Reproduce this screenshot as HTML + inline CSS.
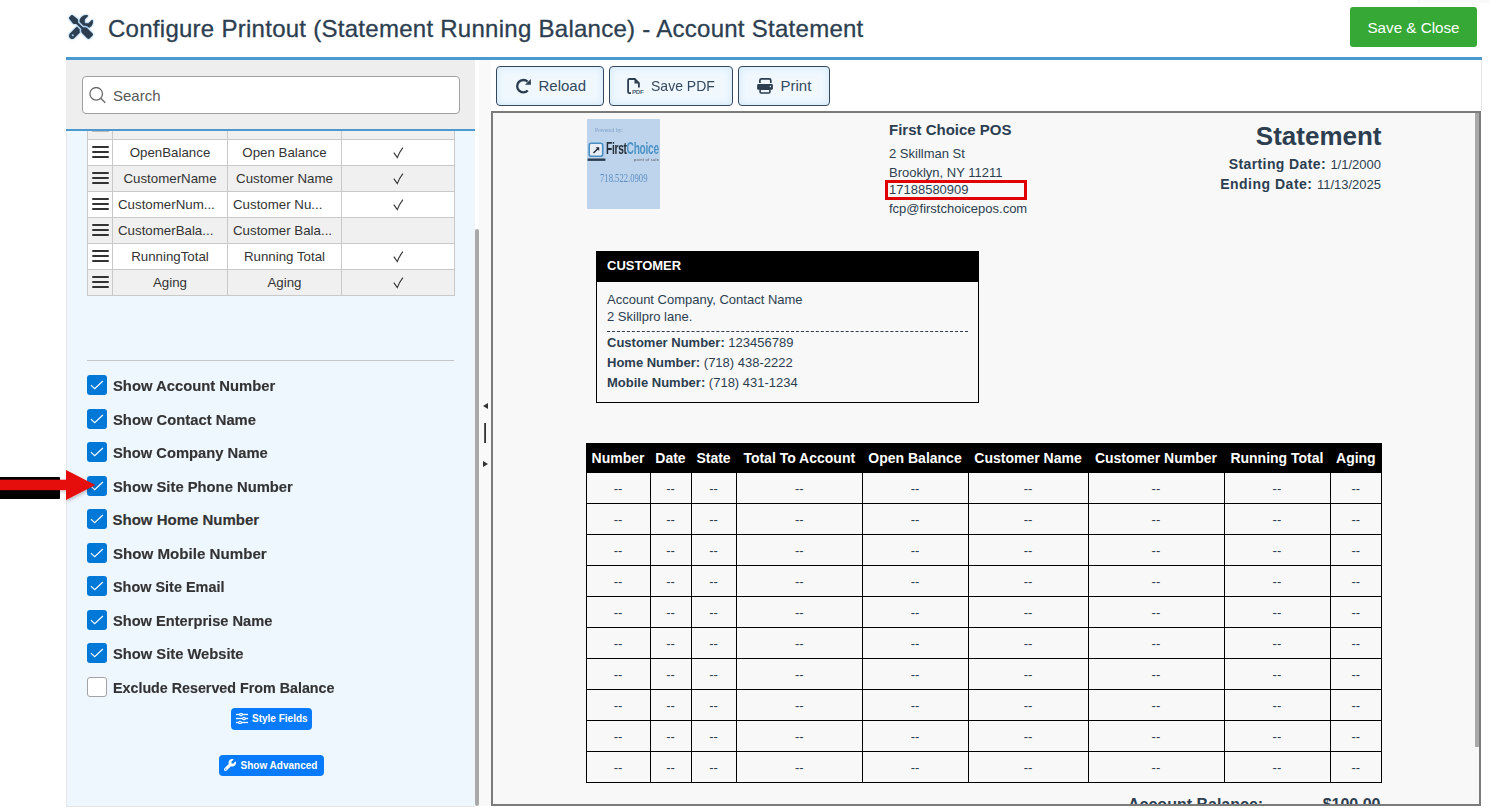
<!DOCTYPE html>
<html>
<head>
<meta charset="utf-8">
<style>
*{box-sizing:border-box;margin:0;padding:0}
html,body{width:1489px;height:810px;overflow:hidden;background:#fff}
body{position:relative;font-family:"Liberation Sans",sans-serif;color:#2c3e50}
.abs{position:absolute}
.t{position:absolute;white-space:nowrap;line-height:1}
/* header */
#title{left:108px;top:17px;font-size:24px;letter-spacing:0.27px;color:#2c3e50;-webkit-text-stroke:0.3px #2c3e50}
#save{left:1350px;top:7px;width:127px;height:40px;background:#36a836;border-radius:3px;color:#fff;font-size:15.2px;text-align:center;line-height:42px}
#topline{left:66px;top:57px;width:1416px;height:3px;background:#4a9ad0}
/* left panel */
#lp{left:66px;top:60px;width:409px;height:747px;background:#eef6fe;overflow:hidden;border-bottom:1px solid #e6e6e6}
#lphead{left:0;top:0;width:409px;height:69px;background:#eeeeee;z-index:3}
#lpline{left:0;top:69px;width:409px;height:2px;background:#4a9ad0;z-index:3}
#search{left:16px;top:16px;width:378px;height:38px;background:#fff;border:1px solid #a0a0a0;border-radius:4px}
#search .t{left:30px;top:11px;font-size:15px;color:#595959}
#grid{left:21px;top:53px;width:368px;border-collapse:collapse;z-index:1}
.row{position:absolute;left:0;width:368px;height:27px;border:1px solid #c9c9c9}
.row.g{background:#f0f0f0}
.row.w{background:#fff}
.row .c{position:absolute;top:0;height:25px;border-left:1px solid #c9c9c9;font-size:13.3px;color:#333;text-align:center;line-height:26px;overflow:hidden;white-space:nowrap}
.hb{position:absolute;left:4px;top:6px;width:17px;height:12px}
.hb i{position:absolute;left:0;width:17px;height:2px;background:#333;border-radius:1px}
#hr{left:21px;top:300px;width:367px;height:1px;background:#c6c6c6}
.cb{position:absolute;left:21px;width:20px;height:20px;border-radius:3px;background:#0078d7}
.cb.off{background:#fff;border:1.5px solid #a3a3a3}
.cb svg{position:absolute;left:0;top:0}
.lbl{position:absolute;left:46.5px;font-size:15px;font-weight:700;color:#333;white-space:nowrap;line-height:1;-webkit-text-stroke:0.15px #333}
.bbtn{position:absolute;background:#087bfc;border-radius:3px;color:#fff;font-size:11px;font-weight:700;white-space:nowrap;line-height:1}
#lscroll{left:475px;top:229px;width:4px;height:577px;background:#a9a9a9;border-radius:2px}
#split{left:479px;top:60px;width:12px;height:746px;background:#f9f9f9}
/* right */
.tb{position:absolute;top:66px;height:40px;border:1px solid #34495e;border-radius:4px;background:#f0f8fe;box-shadow:inset 0 0 7px 1px #d3e9fa}
.tb .t{font-size:15px;color:#34495e}
#frame{left:491px;top:111px;width:990px;height:695px;border:2px solid #7b7b7b;background:#f8f8f8;overflow:hidden}
#rscroll{left:1475px;top:113px;width:4px;height:634px;background:#a9a9a9}
.d{position:absolute;white-space:nowrap;line-height:1;color:#2c3e50}
</style>
</head>
<body>
<!-- header -->
<svg class="abs" style="left:69px;top:15px;filter:drop-shadow(0.7px 0.7px 1.2px rgba(80,160,230,0.9))" width="24" height="24" viewBox="0 0 512 512"><path fill="#2c3e50" d="M78.6 5C69.1-2.4 55.6-1.5 47 7L7 47c-8.5 8.5-9.4 22-2.1 31.6l80 104c4.5 5.9 11.6 9.4 19 9.4h54.1l109 109c-14.7 29-10 65.4 14.3 89.6l112 112c12.5 12.5 32.8 12.5 45.3 0l64-64c12.5-12.5 12.5-32.8 0-45.3l-112-112c-24.200-24.2-60.6-29-89.6-14.3l-109-109V104c0-7.5-3.5-14.5-9.4-19L78.6 5zM19.9 396.1C7.2 408.8 0 426.1 0 444.1C0 481.6 30.4 512 67.9 512c18 0 35.3-7.2 48-19.9L233.7 374.3c-7.8-20.9-9-43.6-3.6-65.1l-61.7-61.7L19.9 396.1zM512 144c0-10.5-1.1-20.7-3.1-30.5c-2.4-11.2-16.1-14.1-24.2-6l-63.9 63.9c-3 3-7.1 4.7-11.300 4.7H352c-8.8 0-16-7.2-16-16V102.6c0-4.2 1.7-8.3 4.7-11.3l63.9-63.9c8.1-8.1 5.2-21.8-6-24.2C388.7 1.1 378.5 0 368 0C288.5 0 224 64.5 224 144l0 .8 85.3 85.3c36-9.1 75.8 .5 104 28.7L429 274.5c49-23 83-72.8 83-130.5zM56 432a24 24 0 1 1 48 0 24 24 0 1 1 -48 0z"/></svg>
<div class="t" id="title">Configure Printout (Statement Running Balance) - Account Statement</div>
<div class="abs" id="save">Save &amp; Close</div>
<div class="abs" id="topline"></div>
<div class="abs" style="left:1417px;top:0;width:72px;height:3px;background:#f9f9f9"></div>

<!-- left panel -->
<div class="abs" id="lp">
  <div class="abs" id="lphead">
    <div class="abs" id="search">
      <svg class="abs" style="left:6px;top:10px" width="18" height="18" viewBox="0 0 18 18"><circle cx="7.2" cy="6.8" r="6.3" fill="none" stroke="#6a6a6a" stroke-width="1.3"/><line x1="11.8" y1="11.3" x2="16.2" y2="15.7" stroke="#6a6a6a" stroke-width="1.4"/></svg>
      <div class="t">Search</div>
    </div>
  </div>
  <div class="abs" id="lpline"></div>
  <div class="abs" id="grid">
    <div class="row g" style="top:0px"><div class="abs" style="left:4px;top:17px;width:17px;height:1px;background:#bbb"></div><div class="c" style="left:24px;width:115px"></div><div class="c" style="left:139px;width:114px"></div><div class="c" style="left:253px;width:114px"> </div></div>
<div class="row w" style="top:26px"><div class="hb"><i style="top:0"></i><i style="top:5px"></i><i style="top:10px"></i></div><div class="c" style="left:24px;width:115px">OpenBalance</div><div class="c" style="left:139px;width:114px">Open Balance</div><div class="c" style="left:253px;width:114px"><svg style="position:absolute;left:51px;top:7px" width="11" height="12" viewBox="0 0 11 12"><path d="M0.8 5.6L4.3 10.6Q6.3 5.2 9.9 0.6" fill="none" stroke="#333" stroke-width="1.1"/></svg></div></div>
<div class="row g" style="top:52px"><div class="hb"><i style="top:0"></i><i style="top:5px"></i><i style="top:10px"></i></div><div class="c" style="left:24px;width:115px">CustomerName</div><div class="c" style="left:139px;width:114px">Customer Name</div><div class="c" style="left:253px;width:114px"><svg style="position:absolute;left:51px;top:7px" width="11" height="12" viewBox="0 0 11 12"><path d="M0.8 5.6L4.3 10.6Q6.3 5.2 9.9 0.6" fill="none" stroke="#333" stroke-width="1.1"/></svg></div></div>
<div class="row w" style="top:78px"><div class="hb"><i style="top:0"></i><i style="top:5px"></i><i style="top:10px"></i></div><div class="c" style="left:24px;width:115px;text-align:left;padding-left:5px">CustomerNum...</div><div class="c" style="left:139px;width:114px;text-align:left;padding-left:5px">Customer Nu...</div><div class="c" style="left:253px;width:114px"><svg style="position:absolute;left:51px;top:7px" width="11" height="12" viewBox="0 0 11 12"><path d="M0.8 5.6L4.3 10.6Q6.3 5.2 9.9 0.6" fill="none" stroke="#333" stroke-width="1.1"/></svg></div></div>
<div class="row g" style="top:104px"><div class="hb"><i style="top:0"></i><i style="top:5px"></i><i style="top:10px"></i></div><div class="c" style="left:24px;width:115px;text-align:left;padding-left:5px">CustomerBala...</div><div class="c" style="left:139px;width:114px;text-align:left;padding-left:5px">Customer Bala...</div><div class="c" style="left:253px;width:114px"></div></div>
<div class="row w" style="top:130px"><div class="hb"><i style="top:0"></i><i style="top:5px"></i><i style="top:10px"></i></div><div class="c" style="left:24px;width:115px">RunningTotal</div><div class="c" style="left:139px;width:114px">Running Total</div><div class="c" style="left:253px;width:114px"><svg style="position:absolute;left:51px;top:7px" width="11" height="12" viewBox="0 0 11 12"><path d="M0.8 5.6L4.3 10.6Q6.3 5.2 9.9 0.6" fill="none" stroke="#333" stroke-width="1.1"/></svg></div></div>
<div class="row g" style="top:156px"><div class="hb"><i style="top:0"></i><i style="top:5px"></i><i style="top:10px"></i></div><div class="c" style="left:24px;width:115px">Aging</div><div class="c" style="left:139px;width:114px">Aging</div><div class="c" style="left:253px;width:114px"><svg style="position:absolute;left:51px;top:7px" width="11" height="12" viewBox="0 0 11 12"><path d="M0.8 5.6L4.3 10.6Q6.3 5.2 9.9 0.6" fill="none" stroke="#333" stroke-width="1.1"/></svg></div></div>
  </div>
  <div class="abs" id="hr"></div>
  <div class="cb" style="top:315px"><svg width="20" height="20" viewBox="0 0 20 20"><path d="M3.9 10.1L7.7 13.7L15.9 6" fill="none" stroke="#fff" stroke-width="1.15"/></svg></div>
<div class="lbl" style="top:318px;transform:scaleX(0.987);transform-origin:0 0">Show Account Number</div>
<div class="cb" style="top:349px"><svg width="20" height="20" viewBox="0 0 20 20"><path d="M3.9 10.1L7.7 13.7L15.9 6" fill="none" stroke="#fff" stroke-width="1.15"/></svg></div>
<div class="lbl" style="top:352px;transform:scaleX(0.986);transform-origin:0 0">Show Contact Name</div>
<div class="cb" style="top:382px"><svg width="20" height="20" viewBox="0 0 20 20"><path d="M3.9 10.1L7.7 13.7L15.9 6" fill="none" stroke="#fff" stroke-width="1.15"/></svg></div>
<div class="lbl" style="top:385px;transform:scaleX(0.982);transform-origin:0 0">Show Company Name</div>
<div class="cb" style="top:416px"><svg width="20" height="20" viewBox="0 0 20 20"><path d="M3.9 10.1L7.7 13.7L15.9 6" fill="none" stroke="#fff" stroke-width="1.15"/></svg></div>
<div class="lbl" style="top:419px;transform:scaleX(0.985);transform-origin:0 0">Show Site Phone Number</div>
<div class="cb" style="top:449px"><svg width="20" height="20" viewBox="0 0 20 20"><path d="M3.9 10.1L7.7 13.7L15.9 6" fill="none" stroke="#fff" stroke-width="1.15"/></svg></div>
<div class="lbl" style="top:452px;transform:scaleX(1.0);transform-origin:0 0">Show Home Number</div>
<div class="cb" style="top:483px"><svg width="20" height="20" viewBox="0 0 20 20"><path d="M3.9 10.1L7.7 13.7L15.9 6" fill="none" stroke="#fff" stroke-width="1.15"/></svg></div>
<div class="lbl" style="top:486px;transform:scaleX(1.008);transform-origin:0 0">Show Mobile Number</div>
<div class="cb" style="top:516px"><svg width="20" height="20" viewBox="0 0 20 20"><path d="M3.9 10.1L7.7 13.7L15.9 6" fill="none" stroke="#fff" stroke-width="1.15"/></svg></div>
<div class="lbl" style="top:519px;transform:scaleX(0.962);transform-origin:0 0">Show Site Email</div>
<div class="cb" style="top:550px"><svg width="20" height="20" viewBox="0 0 20 20"><path d="M3.9 10.1L7.7 13.7L15.9 6" fill="none" stroke="#fff" stroke-width="1.15"/></svg></div>
<div class="lbl" style="top:553px;transform:scaleX(0.975);transform-origin:0 0">Show Enterprise Name</div>
<div class="cb" style="top:583px"><svg width="20" height="20" viewBox="0 0 20 20"><path d="M3.9 10.1L7.7 13.7L15.9 6" fill="none" stroke="#fff" stroke-width="1.15"/></svg></div>
<div class="lbl" style="top:586px;transform:scaleX(0.981);transform-origin:0 0">Show Site Website</div>
<div class="cb off" style="top:617px"></div>
<div class="lbl" style="top:620px;transform:scaleX(0.952);transform-origin:0 0">Exclude Reserved From Balance</div>
<div class="bbtn" style="left:165px;top:648px;width:81px;height:22px;border-radius:4px">
<svg class="abs" style="left:4.5px;top:4.5px" width="12" height="11" viewBox="0 0 12 11"><g stroke="#fff" stroke-width="1.3"><line x1="0" y1="1.5" x2="12" y2="1.5"/><line x1="0" y1="5.5" x2="12" y2="5.5"/><line x1="0" y1="9.5" x2="12" y2="9.5"/></g><g fill="#087bfc" stroke="#fff" stroke-width="1.1"><circle cx="5" cy="1.5" r="1.3"/><circle cx="8" cy="5.5" r="1.3"/><circle cx="4" cy="9.5" r="1.3"/></g></svg>
<div class="abs" style="left:21px;top:6px;font-size:10px">Style Fields</div></div>
<div class="bbtn" style="left:153px;top:695px;width:105px;height:21px;border-radius:4px">
<svg class="abs" style="left:4.5px;top:4px" width="12" height="12" viewBox="0 0 512 512"><path fill="#fff" d="M352 320c88.4 0 160-71.6 160-160c0-15.3-2.2-30.1-6.2-44.2c-3.1-10.8-16.4-13.2-24.3-5.3l-76.8 76.8c-3 3-7.1 4.7-11.3 4.7H336c-8.8 0-16-7.2-16-16V118.6c0-4.2 1.7-8.3 4.7-11.3l76.8-76.8c7.9-7.9 5.4-21.2-5.3-24.3C382.1 2.2 367.3 0 352 0C263.6 0 192 71.6 192 160c0 19.1 3.4 37.5 9.5 54.5L19.9 396.1C7.2 408.8 0 426.1 0 444.1C0 481.6 30.4 512 67.9 512c18 0 35.3-7.2 48-19.9L297.5 310.5c17 6.2 35.4 9.5 54.5 9.5zM80 408a24 24 0 1 1 0 48 24 24 0 1 1 0-48z"/></svg>
<div class="abs" style="left:21.5px;top:5.5px;font-size:10px">Show Advanced</div></div>
</div>
<div class="abs" id="lscroll"></div>
<div class="abs" style="left:66px;top:131px;width:1px;height:676px;background:#e6e6e6"></div>
<div class="abs" id="split"></div>
<svg class="abs" style="left:482px;top:402px" width="8" height="66" viewBox="0 0 8 66"><path d="M1 4L6 1V7Z" fill="#333"/><rect x="2.2" y="21" width="1.8" height="20" fill="#333"/><path d="M1 59V65L6 62Z" fill="#333"/></svg>
<svg class="abs" style="left:0;top:468px" width="100" height="36" viewBox="0 0 100 36"><defs><filter id="sh" x="-20%" y="-20%" width="150%" height="160%"><feDropShadow dx="1" dy="2" stdDeviation="1.5" flood-color="#000" flood-opacity="0.2"/></filter></defs><rect x="-4" y="9" width="64" height="22" rx="1" fill="#000"/><g filter="url(#sh)"><rect x="-2" y="11.7" width="70" height="10.4" fill="#e60808"/><path d="M66 2V32L95.3 17Z" fill="#e60808"/></g></svg>

<!-- right panel -->
<div class="tb" style="left:496px;width:108px">
<svg class="abs" style="left:18px;top:11px" width="16" height="16" viewBox="0 0 16 16"><path d="M12.8 12.5A6.2 6.2 0 1 1 12.6 3.6" fill="none" stroke="#2c3e50" stroke-width="2.4"/><path d="M15.9 0.9V6.8H10Z" fill="#2c3e50"/></svg>
<div class="t" style="left:41.5px;top:11px">Reload</div></div>
<div class="tb" style="left:609px;width:124px">
<svg class="abs" style="left:17px;top:11px" width="17" height="17" viewBox="0 0 17 17"><path d="M4 15.1H2.4Q1.1 15.1 1.1 13.8V2.3Q1.1 1 2.4 1H7.8L11.9 5.1V9.6" fill="none" stroke="#2c3e50" stroke-width="1.8"/><path d="M7.5 0.9L12 5.4H7.5Z" fill="#2c3e50"/><text x="5" y="15.7" font-family="Liberation Sans" font-weight="700" font-size="6.2" fill="#52677a" letter-spacing="-0.3">PDF</text></svg>
<div class="t" style="left:41px;top:11px;transform:scaleX(0.934);transform-origin:0 0">Save PDF</div></div>
<div class="tb" style="left:738px;width:92px">
<svg class="abs" style="left:18px;top:11px" width="16" height="16" viewBox="0 0 16 16"><path d="M2.9 5V2.4Q2.9 0.9 4.4 0.9H12.3Q13.8 0.9 13.8 2.4V5" fill="none" stroke="#2c3e50" stroke-width="1.7"/><rect x="0.1" y="6.1" width="15.8" height="5.6" rx="1.3" fill="#2c3e50"/><circle cx="13.4" cy="8.5" r="0.8" fill="#dfeefa"/><rect x="3.1" y="11.3" width="9.8" height="3.7" rx="1" fill="#eef6fd" stroke="#2c3e50" stroke-width="1.6"/></svg>
<div class="t" style="left:41.5px;top:11px">Print</div></div>

<div class="abs" id="frame">
<div class="abs" id="logo" style="left:94px;top:6px;width:73px;height:90px;background:#bdd4ec">
<div class="d" style="left:8px;top:8px;font-family:'Liberation Serif',serif;font-size:6.5px;transform:scaleX(0.85);transform-origin:0 0;color:#7f9dc6">Powered by:</div>
<svg class="abs" style="left:0;top:23px" width="19" height="20" viewBox="0 0 19 20"><rect x="2.2" y="1.2" width="13.5" height="13" rx="2" fill="#e9eef5" stroke="#4a8fc4" stroke-width="1.6"/><path d="M6.5 11L11 6.5" stroke="#1f2a36" stroke-width="1.4"/><path d="M8.6 5.3H12.2V8.9Z" fill="#1f2a36"/><rect x="0.6" y="16.5" width="17.8" height="2.4" fill="#2c3e50"/></svg>
<div class="d" style="left:19px;top:21px;font-size:17px;letter-spacing:-0.5px;transform:scaleX(0.6);transform-origin:0 0;color:#232d38;font-weight:700">First<span style="color:#4d93c6">Choice</span></div>
<div class="d" style="left:47px;top:38.5px;font-size:4.2px;transform:scaleX(0.95);transform-origin:0 0;color:#555;letter-spacing:0.3px">point of sale</div>
<div class="d" style="left:12.5px;top:54px;font-family:'Liberation Serif',serif;font-size:11.5px;transform:scaleX(0.75);transform-origin:0 0;color:#5f8fc4">718.522.0909</div>
</div>
<div class="d" style="left:396px;top:9.3px;font-size:15px;font-weight:700">First Choice POS</div>
<div class="d" style="left:396px;top:33.6px;font-size:13px">2 Skillman St</div>
<div class="d" style="left:396px;top:52.7px;font-size:13px">Brooklyn, NY 11211</div>
<div class="d" style="left:396px;top:70.3px;font-size:13px">17188580909</div>
<div class="d" style="left:396px;top:89px;font-size:13px">fcp@firstchoicepos.com</div>
<div class="abs" style="left:392px;top:67px;width:142px;height:20px;border:3px solid #e10000"></div>
<div class="d" style="right:97.5px;top:10.2px;font-size:26px;font-weight:700;text-align:right">Statement</div>
<div class="d" style="right:98px;top:44.4px;font-size:14px;text-align:right"><b style="letter-spacing:0.4px">Starting Date: </b><span style="font-size:13px">1/1/2000</span></div>
<div class="d" style="right:98px;top:63.6px;font-size:14px;text-align:right"><b style="letter-spacing:0.5px">Ending Date: </b><span style="font-size:13px">11/13/2025</span></div>
<div class="abs" style="left:103px;top:138px;width:383px;height:152px;border:1px solid #000">
<div class="abs" style="left:0;top:0;width:381px;height:30px;background:#000"></div>
<div class="d" style="left:10px;top:7.4px;font-size:13px;font-weight:700;color:#fff">CUSTOMER</div>
<div class="d" style="left:10px;top:41.4px;font-size:13px">Account Company, Contact Name</div>
<div class="d" style="left:10px;top:58.2px;font-size:13px">2 Skillpro lane.</div>
<div class="abs" style="left:10px;top:79px;width:361px;height:0;border-top:1px dashed #2c3e50"></div>
<div class="d" style="left:10px;top:83.8px;font-size:13px"><b>Customer Number:</b> 123456789</div>
<div class="d" style="left:10px;top:104px;font-size:13px"><b>Home Number:</b> (718) 438-2222</div>
<div class="d" style="left:10px;top:123.6px;font-size:13px"><b>Mobile Number:</b> (718) 431-1234</div>
</div>
<div class="abs" style="left:93px;top:330px;width:796px;height:30px;background:#000"></div>
<div class="d" style="left:93px;top:330px;width:64px;height:30px;line-height:30px;text-align:center;font-size:14px;font-weight:700;color:#fff">Number</div>
<div class="d" style="left:157px;top:330px;width:41px;height:30px;line-height:30px;text-align:center;font-size:14px;font-weight:700;color:#fff">Date</div>
<div class="d" style="left:198px;top:330px;width:45px;height:30px;line-height:30px;text-align:center;font-size:14px;font-weight:700;color:#fff">State</div>
<div class="d" style="left:243px;top:330px;width:126.5px;height:30px;line-height:30px;text-align:center;font-size:14px;font-weight:700;color:#fff">Total To Account</div>
<div class="d" style="left:369px;top:330px;width:106.0px;height:30px;line-height:30px;text-align:center;font-size:14px;font-weight:700;color:#fff">Open Balance</div>
<div class="d" style="left:475px;top:330px;width:120.0px;height:30px;line-height:30px;text-align:center;font-size:14px;font-weight:700;color:#fff">Customer Name</div>
<div class="d" style="left:595px;top:330px;width:135.89999999999998px;height:30px;line-height:30px;text-align:center;font-size:14px;font-weight:700;color:#fff">Customer Number</div>
<div class="d" style="left:731px;top:330px;width:105.89999999999998px;height:30px;line-height:30px;text-align:center;font-size:14px;font-weight:700;color:#fff">Running Total</div>
<div class="d" style="left:837px;top:330px;width:51.700000000000045px;height:30px;line-height:30px;text-align:center;font-size:14px;font-weight:700;color:#fff">Aging</div>
<div class="abs" style="left:93px;top:360px;width:1px;height:310px;background:#000"></div>
<div class="abs" style="left:157px;top:360px;width:1px;height:310px;background:#000"></div>
<div class="abs" style="left:198px;top:360px;width:1px;height:310px;background:#000"></div>
<div class="abs" style="left:243px;top:360px;width:1px;height:310px;background:#000"></div>
<div class="abs" style="left:369px;top:360px;width:1px;height:310px;background:#000"></div>
<div class="abs" style="left:475px;top:360px;width:1px;height:310px;background:#000"></div>
<div class="abs" style="left:595px;top:360px;width:1px;height:310px;background:#000"></div>
<div class="abs" style="left:731px;top:360px;width:1px;height:310px;background:#000"></div>
<div class="abs" style="left:837px;top:360px;width:1px;height:310px;background:#000"></div>
<div class="abs" style="left:888px;top:360px;width:1px;height:310px;background:#000"></div>
<div class="abs" style="left:93px;top:390px;width:796px;height:1px;background:#000"></div>
<div class="d" style="left:93px;top:360px;width:64px;height:31px;line-height:31px;text-align:center;font-size:13px">--</div>
<div class="d" style="left:157px;top:360px;width:41px;height:31px;line-height:31px;text-align:center;font-size:13px">--</div>
<div class="d" style="left:198px;top:360px;width:45px;height:31px;line-height:31px;text-align:center;font-size:13px">--</div>
<div class="d" style="left:243px;top:360px;width:126.5px;height:31px;line-height:31px;text-align:center;font-size:13px">--</div>
<div class="d" style="left:369px;top:360px;width:106.0px;height:31px;line-height:31px;text-align:center;font-size:13px">--</div>
<div class="d" style="left:475px;top:360px;width:120.0px;height:31px;line-height:31px;text-align:center;font-size:13px">--</div>
<div class="d" style="left:595px;top:360px;width:135.89999999999998px;height:31px;line-height:31px;text-align:center;font-size:13px">--</div>
<div class="d" style="left:731px;top:360px;width:105.89999999999998px;height:31px;line-height:31px;text-align:center;font-size:13px">--</div>
<div class="d" style="left:837px;top:360px;width:51.700000000000045px;height:31px;line-height:31px;text-align:center;font-size:13px">--</div>
<div class="abs" style="left:93px;top:421px;width:796px;height:1px;background:#000"></div>
<div class="d" style="left:93px;top:391px;width:64px;height:31px;line-height:31px;text-align:center;font-size:13px">--</div>
<div class="d" style="left:157px;top:391px;width:41px;height:31px;line-height:31px;text-align:center;font-size:13px">--</div>
<div class="d" style="left:198px;top:391px;width:45px;height:31px;line-height:31px;text-align:center;font-size:13px">--</div>
<div class="d" style="left:243px;top:391px;width:126.5px;height:31px;line-height:31px;text-align:center;font-size:13px">--</div>
<div class="d" style="left:369px;top:391px;width:106.0px;height:31px;line-height:31px;text-align:center;font-size:13px">--</div>
<div class="d" style="left:475px;top:391px;width:120.0px;height:31px;line-height:31px;text-align:center;font-size:13px">--</div>
<div class="d" style="left:595px;top:391px;width:135.89999999999998px;height:31px;line-height:31px;text-align:center;font-size:13px">--</div>
<div class="d" style="left:731px;top:391px;width:105.89999999999998px;height:31px;line-height:31px;text-align:center;font-size:13px">--</div>
<div class="d" style="left:837px;top:391px;width:51.700000000000045px;height:31px;line-height:31px;text-align:center;font-size:13px">--</div>
<div class="abs" style="left:93px;top:452px;width:796px;height:1px;background:#000"></div>
<div class="d" style="left:93px;top:422px;width:64px;height:31px;line-height:31px;text-align:center;font-size:13px">--</div>
<div class="d" style="left:157px;top:422px;width:41px;height:31px;line-height:31px;text-align:center;font-size:13px">--</div>
<div class="d" style="left:198px;top:422px;width:45px;height:31px;line-height:31px;text-align:center;font-size:13px">--</div>
<div class="d" style="left:243px;top:422px;width:126.5px;height:31px;line-height:31px;text-align:center;font-size:13px">--</div>
<div class="d" style="left:369px;top:422px;width:106.0px;height:31px;line-height:31px;text-align:center;font-size:13px">--</div>
<div class="d" style="left:475px;top:422px;width:120.0px;height:31px;line-height:31px;text-align:center;font-size:13px">--</div>
<div class="d" style="left:595px;top:422px;width:135.89999999999998px;height:31px;line-height:31px;text-align:center;font-size:13px">--</div>
<div class="d" style="left:731px;top:422px;width:105.89999999999998px;height:31px;line-height:31px;text-align:center;font-size:13px">--</div>
<div class="d" style="left:837px;top:422px;width:51.700000000000045px;height:31px;line-height:31px;text-align:center;font-size:13px">--</div>
<div class="abs" style="left:93px;top:483px;width:796px;height:1px;background:#000"></div>
<div class="d" style="left:93px;top:453px;width:64px;height:31px;line-height:31px;text-align:center;font-size:13px">--</div>
<div class="d" style="left:157px;top:453px;width:41px;height:31px;line-height:31px;text-align:center;font-size:13px">--</div>
<div class="d" style="left:198px;top:453px;width:45px;height:31px;line-height:31px;text-align:center;font-size:13px">--</div>
<div class="d" style="left:243px;top:453px;width:126.5px;height:31px;line-height:31px;text-align:center;font-size:13px">--</div>
<div class="d" style="left:369px;top:453px;width:106.0px;height:31px;line-height:31px;text-align:center;font-size:13px">--</div>
<div class="d" style="left:475px;top:453px;width:120.0px;height:31px;line-height:31px;text-align:center;font-size:13px">--</div>
<div class="d" style="left:595px;top:453px;width:135.89999999999998px;height:31px;line-height:31px;text-align:center;font-size:13px">--</div>
<div class="d" style="left:731px;top:453px;width:105.89999999999998px;height:31px;line-height:31px;text-align:center;font-size:13px">--</div>
<div class="d" style="left:837px;top:453px;width:51.700000000000045px;height:31px;line-height:31px;text-align:center;font-size:13px">--</div>
<div class="abs" style="left:93px;top:514px;width:796px;height:1px;background:#000"></div>
<div class="d" style="left:93px;top:484px;width:64px;height:31px;line-height:31px;text-align:center;font-size:13px">--</div>
<div class="d" style="left:157px;top:484px;width:41px;height:31px;line-height:31px;text-align:center;font-size:13px">--</div>
<div class="d" style="left:198px;top:484px;width:45px;height:31px;line-height:31px;text-align:center;font-size:13px">--</div>
<div class="d" style="left:243px;top:484px;width:126.5px;height:31px;line-height:31px;text-align:center;font-size:13px">--</div>
<div class="d" style="left:369px;top:484px;width:106.0px;height:31px;line-height:31px;text-align:center;font-size:13px">--</div>
<div class="d" style="left:475px;top:484px;width:120.0px;height:31px;line-height:31px;text-align:center;font-size:13px">--</div>
<div class="d" style="left:595px;top:484px;width:135.89999999999998px;height:31px;line-height:31px;text-align:center;font-size:13px">--</div>
<div class="d" style="left:731px;top:484px;width:105.89999999999998px;height:31px;line-height:31px;text-align:center;font-size:13px">--</div>
<div class="d" style="left:837px;top:484px;width:51.700000000000045px;height:31px;line-height:31px;text-align:center;font-size:13px">--</div>
<div class="abs" style="left:93px;top:545px;width:796px;height:1px;background:#000"></div>
<div class="d" style="left:93px;top:515px;width:64px;height:31px;line-height:31px;text-align:center;font-size:13px">--</div>
<div class="d" style="left:157px;top:515px;width:41px;height:31px;line-height:31px;text-align:center;font-size:13px">--</div>
<div class="d" style="left:198px;top:515px;width:45px;height:31px;line-height:31px;text-align:center;font-size:13px">--</div>
<div class="d" style="left:243px;top:515px;width:126.5px;height:31px;line-height:31px;text-align:center;font-size:13px">--</div>
<div class="d" style="left:369px;top:515px;width:106.0px;height:31px;line-height:31px;text-align:center;font-size:13px">--</div>
<div class="d" style="left:475px;top:515px;width:120.0px;height:31px;line-height:31px;text-align:center;font-size:13px">--</div>
<div class="d" style="left:595px;top:515px;width:135.89999999999998px;height:31px;line-height:31px;text-align:center;font-size:13px">--</div>
<div class="d" style="left:731px;top:515px;width:105.89999999999998px;height:31px;line-height:31px;text-align:center;font-size:13px">--</div>
<div class="d" style="left:837px;top:515px;width:51.700000000000045px;height:31px;line-height:31px;text-align:center;font-size:13px">--</div>
<div class="abs" style="left:93px;top:576px;width:796px;height:1px;background:#000"></div>
<div class="d" style="left:93px;top:546px;width:64px;height:31px;line-height:31px;text-align:center;font-size:13px">--</div>
<div class="d" style="left:157px;top:546px;width:41px;height:31px;line-height:31px;text-align:center;font-size:13px">--</div>
<div class="d" style="left:198px;top:546px;width:45px;height:31px;line-height:31px;text-align:center;font-size:13px">--</div>
<div class="d" style="left:243px;top:546px;width:126.5px;height:31px;line-height:31px;text-align:center;font-size:13px">--</div>
<div class="d" style="left:369px;top:546px;width:106.0px;height:31px;line-height:31px;text-align:center;font-size:13px">--</div>
<div class="d" style="left:475px;top:546px;width:120.0px;height:31px;line-height:31px;text-align:center;font-size:13px">--</div>
<div class="d" style="left:595px;top:546px;width:135.89999999999998px;height:31px;line-height:31px;text-align:center;font-size:13px">--</div>
<div class="d" style="left:731px;top:546px;width:105.89999999999998px;height:31px;line-height:31px;text-align:center;font-size:13px">--</div>
<div class="d" style="left:837px;top:546px;width:51.700000000000045px;height:31px;line-height:31px;text-align:center;font-size:13px">--</div>
<div class="abs" style="left:93px;top:607px;width:796px;height:1px;background:#000"></div>
<div class="d" style="left:93px;top:577px;width:64px;height:31px;line-height:31px;text-align:center;font-size:13px">--</div>
<div class="d" style="left:157px;top:577px;width:41px;height:31px;line-height:31px;text-align:center;font-size:13px">--</div>
<div class="d" style="left:198px;top:577px;width:45px;height:31px;line-height:31px;text-align:center;font-size:13px">--</div>
<div class="d" style="left:243px;top:577px;width:126.5px;height:31px;line-height:31px;text-align:center;font-size:13px">--</div>
<div class="d" style="left:369px;top:577px;width:106.0px;height:31px;line-height:31px;text-align:center;font-size:13px">--</div>
<div class="d" style="left:475px;top:577px;width:120.0px;height:31px;line-height:31px;text-align:center;font-size:13px">--</div>
<div class="d" style="left:595px;top:577px;width:135.89999999999998px;height:31px;line-height:31px;text-align:center;font-size:13px">--</div>
<div class="d" style="left:731px;top:577px;width:105.89999999999998px;height:31px;line-height:31px;text-align:center;font-size:13px">--</div>
<div class="d" style="left:837px;top:577px;width:51.700000000000045px;height:31px;line-height:31px;text-align:center;font-size:13px">--</div>
<div class="abs" style="left:93px;top:638px;width:796px;height:1px;background:#000"></div>
<div class="d" style="left:93px;top:608px;width:64px;height:31px;line-height:31px;text-align:center;font-size:13px">--</div>
<div class="d" style="left:157px;top:608px;width:41px;height:31px;line-height:31px;text-align:center;font-size:13px">--</div>
<div class="d" style="left:198px;top:608px;width:45px;height:31px;line-height:31px;text-align:center;font-size:13px">--</div>
<div class="d" style="left:243px;top:608px;width:126.5px;height:31px;line-height:31px;text-align:center;font-size:13px">--</div>
<div class="d" style="left:369px;top:608px;width:106.0px;height:31px;line-height:31px;text-align:center;font-size:13px">--</div>
<div class="d" style="left:475px;top:608px;width:120.0px;height:31px;line-height:31px;text-align:center;font-size:13px">--</div>
<div class="d" style="left:595px;top:608px;width:135.89999999999998px;height:31px;line-height:31px;text-align:center;font-size:13px">--</div>
<div class="d" style="left:731px;top:608px;width:105.89999999999998px;height:31px;line-height:31px;text-align:center;font-size:13px">--</div>
<div class="d" style="left:837px;top:608px;width:51.700000000000045px;height:31px;line-height:31px;text-align:center;font-size:13px">--</div>
<div class="abs" style="left:93px;top:669px;width:796px;height:1px;background:#000"></div>
<div class="d" style="left:93px;top:639px;width:64px;height:31px;line-height:31px;text-align:center;font-size:13px">--</div>
<div class="d" style="left:157px;top:639px;width:41px;height:31px;line-height:31px;text-align:center;font-size:13px">--</div>
<div class="d" style="left:198px;top:639px;width:45px;height:31px;line-height:31px;text-align:center;font-size:13px">--</div>
<div class="d" style="left:243px;top:639px;width:126.5px;height:31px;line-height:31px;text-align:center;font-size:13px">--</div>
<div class="d" style="left:369px;top:639px;width:106.0px;height:31px;line-height:31px;text-align:center;font-size:13px">--</div>
<div class="d" style="left:475px;top:639px;width:120.0px;height:31px;line-height:31px;text-align:center;font-size:13px">--</div>
<div class="d" style="left:595px;top:639px;width:135.89999999999998px;height:31px;line-height:31px;text-align:center;font-size:13px">--</div>
<div class="d" style="left:731px;top:639px;width:105.89999999999998px;height:31px;line-height:31px;text-align:center;font-size:13px">--</div>
<div class="d" style="left:837px;top:639px;width:51.700000000000045px;height:31px;line-height:31px;text-align:center;font-size:13px">--</div>
<div class="d" style="left:635px;top:684px;font-size:16px;font-weight:700">Account Balance:</div>
<div class="d" style="right:98.5px;top:684px;font-size:16px;font-weight:700">$100.00</div>
</div>
<div class="abs" id="rscroll"></div>
<div class="abs" style="left:1481px;top:60px;width:1px;height:51px;background:#e6e6e6"></div>
</body>
</html>
